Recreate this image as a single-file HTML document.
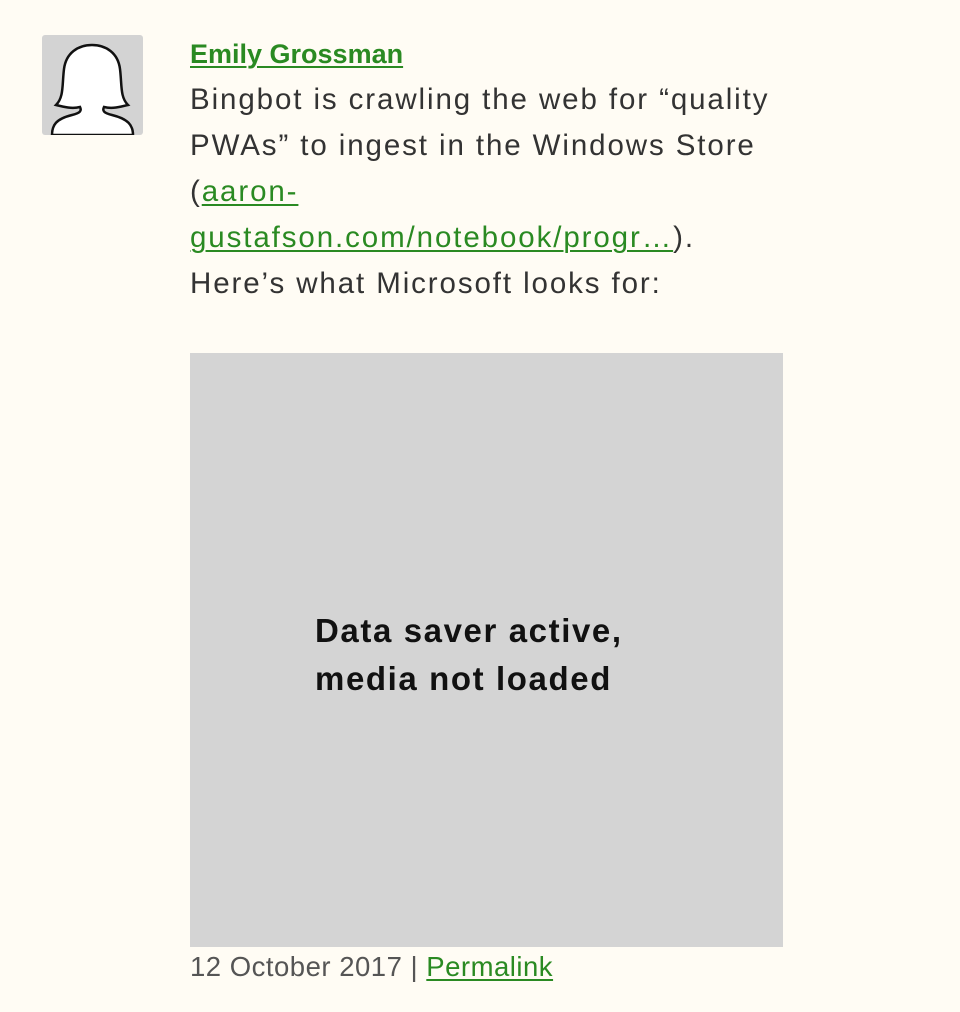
<!DOCTYPE html>
<html><head><meta charset="utf-8"><style>
html,body{margin:0;padding:0;background:#fffcf4;width:960px;height:1012px;overflow:hidden;}
body{font-family:"Liberation Sans",sans-serif;color:#333;}
.av{position:absolute;left:42px;top:35px;width:101px;height:100px;background:#d3d3d3;border-radius:3px;overflow:hidden;}
.c{position:absolute;left:190px;top:31px;width:760px;font-size:29.5px;line-height:46px;white-space:nowrap;letter-spacing:1.9px;}
a{color:#2a8a22;text-decoration:underline;text-decoration-thickness:2px;text-underline-offset:3px;}
.name{font-weight:bold;font-size:27px;letter-spacing:0;}
.img{position:absolute;left:190px;top:353px;width:593px;height:594px;background:#d4d4d4;}
.img div{position:absolute;left:125px;top:254px;font-size:33px;line-height:48px;color:#111;font-weight:bold;letter-spacing:1.6px;}
.date{position:absolute;left:190px;top:947px;font-size:27.5px;line-height:40px;color:#555;white-space:nowrap;letter-spacing:0.5px;}
</style></head><body>
<div class="av"><svg width="101" height="100" viewBox="0 0 101 100"><path d="M10 100 C10 90 14 84 30 80 C38 78 40 76 38 72 C30 74 22 72 14 70 C22 62 20 50 22 34 C24 18 36 10 50 10 C64 10 76 18 78 34 C80 50 78 62 86 70 C78 72 70 74 62 72 C60 76 62 78 70 80 C86 84 91 90 91 100 Z" fill="#fff" stroke="#111" stroke-width="2.5"/></svg></div>
<div class="c"><a class="name">Emily Grossman</a><br>Bingbot is crawling the web for “quality<br>PWAs” to ingest in the Windows Store<br>(<a>aaron-</a><br><a>gustafson.com/notebook/progr…</a>).<br>Here’s what Microsoft looks for:</div>
<div class="img"><div>Data saver active,<br>media not loaded</div></div>
<div class="date">12 October 2017 | <a>Permalink</a></div>
</body></html>
